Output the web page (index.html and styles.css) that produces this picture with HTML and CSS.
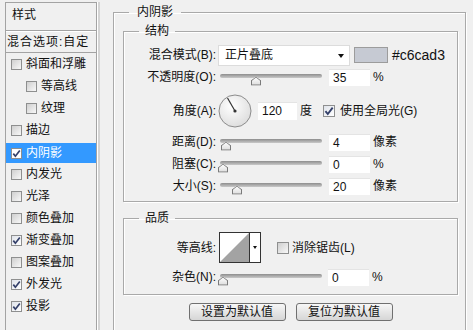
FILE: index.html
```html
<!DOCTYPE html>
<html lang="zh-CN">
<head>
    <meta charset="UTF-8">
    <title>图层样式 - 内阴影</title>
    <link rel="stylesheet" href="styles.css">
</head>
<body>

<div class="dialog">
    <div class="style-list">
        <div class="list-head">样式</div>
        <div class="list-blend">混合选项:自定</div>
        <div class="list-item"><span class="check"></span>斜面和浮雕</div>
        <div class="list-item sub"><span class="check"></span>等高线</div>
        <div class="list-item sub"><span class="check"></span>纹理</div>
        <div class="list-item"><span class="check"></span>描边</div>
        <div class="list-item active"><span class="check on"><svg width="9" height="9" viewBox="0 0 9 9"><path d="M1.3 4.6 L3.4 7.2 L7.8 1.4" fill="none" stroke="#34406a" stroke-width="1.7"/></svg></span>内阴影</div>
        <div class="list-item"><span class="check"></span>内发光</div>
        <div class="list-item"><span class="check"></span>光泽</div>
        <div class="list-item"><span class="check"></span>颜色叠加</div>
        <div class="list-item"><span class="check on"><svg width="9" height="9" viewBox="0 0 9 9"><path d="M1.3 4.6 L3.4 7.2 L7.8 1.4" fill="none" stroke="#34406a" stroke-width="1.7"/></svg></span>渐变叠加</div>
        <div class="list-item"><span class="check"></span>图案叠加</div>
        <div class="list-item"><span class="check on"><svg width="9" height="9" viewBox="0 0 9 9"><path d="M1.3 4.6 L3.4 7.2 L7.8 1.4" fill="none" stroke="#34406a" stroke-width="1.7"/></svg></span>外发光</div>
        <div class="list-item"><span class="check on"><svg width="9" height="9" viewBox="0 0 9 9"><path d="M1.3 4.6 L3.4 7.2 L7.8 1.4" fill="none" stroke="#34406a" stroke-width="1.7"/></svg></span>投影</div>
    </div>

    <div class="main">
        <fieldset class="group outer">
            <legend>内阴影</legend>
            <div class="outer-body">

                <fieldset class="group">
                    <legend>结构</legend>
                    <div class="group-body">
                        <div class="row">
                            <span class="lbl">混合模式(B):</span>
                            <div class="select">正片叠底<span class="arrow"></span></div>
                            <span class="swatch"></span>
                            <span class="hex">#c6cad3</span>
                        </div>
                        <div class="row">
                            <span class="lbl">不透明度(O):</span>
                            <div class="slider"><span class="thumb" style="left: 31px"></span></div>
                            <div class="num">35</div>
                            <span class="unit">%</span>
                        </div>
                        <div class="row tall">
                            <span class="lbl">角度(A):</span>
                            <svg class="dial" width="34" height="34" viewBox="0 0 34 34">
                                <defs>
                                    <radialGradient id="dialfill" cx="40%" cy="35%" r="70%">
                                        <stop offset="0" stop-color="#ffffff"/>
                                        <stop offset="1" stop-color="#dcdcdc"/>
                                    </radialGradient>
                                </defs>
                                <circle cx="17" cy="17" r="16" fill="url(#dialfill)" stroke="#8c8c8c"/>
                                <line x1="17" y1="17" x2="9.5" y2="4" stroke="#333" stroke-width="1.2"/>
                                <circle cx="17" cy="17" r="1.6" fill="#333"/>
                            </svg>
                            <div class="num angle">120</div>
                            <span class="unit">度</span>
                            <span class="check big on"><svg width="10" height="10" viewBox="0 0 9 9"><path d="M1.3 4.6 L3.4 7.2 L7.8 1.4" fill="none" stroke="#34406a" stroke-width="1.7"/></svg></span>
                            <span class="check-text">使用全局光(G)</span>
                        </div>
                        <div class="row gap">
                            <span class="lbl">距离(D):</span>
                            <div class="slider"><span class="thumb" style="left: 1px"></span></div>
                            <div class="num">4</div>
                            <span class="unit">像素</span>
                        </div>
                        <div class="row">
                            <span class="lbl">阻塞(C):</span>
                            <div class="slider"><span class="thumb" style="left: -2px"></span></div>
                            <div class="num">0</div>
                            <span class="unit">%</span>
                        </div>
                        <div class="row">
                            <span class="lbl">大小(S):</span>
                            <div class="slider"><span class="thumb" style="left: 12px"></span></div>
                            <div class="num">20</div>
                            <span class="unit">像素</span>
                        </div>
                    </div>
                </fieldset>

                <fieldset class="group quality">
                    <legend>品质</legend>
                    <div class="group-body">
                        <div class="row contour-row">
                            <span class="lbl">等高线:</span>
                            <div class="contour">
                                <svg width="29" height="29" viewBox="0 0 29 29">
                                    <rect width="29" height="29" fill="#fff"/>
                                    <polygon points="0,29 29,0 29,29" fill="#a3a3a3"/>
                                </svg>
                                <span class="contour-drop"><span class="arrow small"></span></span>
                            </div>
                            <span class="check big"></span>
                            <span class="check-text">消除锯齿(L)</span>
                        </div>
                        <div class="row">
                            <span class="lbl">杂色(N):</span>
                            <div class="slider"><span class="thumb" style="left: -2px"></span></div>
                            <div class="num noise">0</div>
                            <span class="unit">%</span>
                        </div>
                    </div>
                </fieldset>

                <div class="buttons">
                    <button class="btn">设置为默认值</button>
                    <button class="btn">复位为默认值</button>
                </div>

            </div>
        </fieldset>
    </div>
</div>

</body>
</html>
```

FILE: styles.css
```css
body {
    margin: 0;
    padding: 0;
    width: 473px;
    height: 330px;
    overflow: hidden;
    background-color: #f0f0f0;
    color: #111;
    font-family: "Liberation Sans", "Noto Sans CJK SC", sans-serif;
    font-size: 12px;
    line-height: 14px;
}
.dialog {
    display: flex;
    height: 330px;
    padding: 2px 0 0 5px;
    box-sizing: border-box;
}

/* left list */
.style-list {
    flex: none;
    width: 90px;
    border: 1px solid #a3a3a3;
    border-bottom: none;
    box-shadow: 1px 0 0 #fff, 3px 0 0 #d4d4d4;
}
.list-head {
    height: 27px;
    line-height: 25px;
    padding-left: 6px;
    border-bottom: 1px solid #a3a3a3;
    box-shadow: 0 1px 0 #fff;
    margin-bottom: 1px;
}
.list-blend {
    height: 20px;
    line-height: 20px;
    padding-left: 1px;
    letter-spacing: 1px;
    white-space: nowrap;
    border-bottom: 1px solid #a3a3a3;
}
.list-item {
    display: flex;
    align-items: center;
    height: 22px;
    padding-left: 5px;
    white-space: nowrap;
}
.list-item.sub {
    padding-left: 20px;
}
.list-item.active {
    height: 20px;
    padding-top: 2px;
    padding-left: 0;
    background-color: #3399ff;
    background-clip: content-box;
    color: #fff;
}
.list-item.active .check {
    margin-left: 5px;
    background: #fff;
}

/* checkbox */
.check {
    flex: none;
    display: inline-flex;
    align-items: center;
    justify-content: center;
    width: 9px;
    height: 9px;
    margin-right: 4px;
    border: 1px solid #8e8f8f;
    background: linear-gradient(135deg, #cfcfcf, #f8f8f8);
}
.check.on {
    background: linear-gradient(135deg, #dfe3ea, #ffffff);
}
.check.big {
    width: 10px;
    height: 10px;
}

/* right side */
.main {
    flex: none;
    width: 353px;
    padding: 3px 0 0 16px;
    margin-right: 3px;
}
.group {
    margin: 0;
    padding: 0;
    min-width: 0;
    border: 1px solid #a9a9a9;
    box-shadow: inset 1px 1px 0 #fff, 1px 1px 0 #fff;
}
.group legend {
    padding: 0 6px;
    margin-left: 15px;
    line-height: 14px;
}
.outer {
    width: 353px;
    box-sizing: border-box;
    border-bottom: none;
}
.outer > legend {
    padding: 0 8px;
    margin-left: 15px;
}
.outer-body {
    padding: 5px 7px 20px 9px;
}
.group-body {
    padding: 6px 0 4px 4px;
}
.quality {
    margin-top: 9px;
}
.quality .group-body {
    padding: 5px 0 6px 4px;
}

.row {
    display: flex;
    align-items: center;
    height: 22px;
    white-space: nowrap;
}
.row.tall {
    height: 36px;
    margin-top: 5px;
}
.row.gap {
    margin-top: 2px;
}
.row.contour-row {
    height: 35px;
    margin-bottom: 1px;
}
.lbl {
    flex: none;
    width: 88px;
    text-align: right;
}

.select {
    position: relative;
    width: 124px;
    height: 19px;
    margin-left: 2px;
    padding-left: 6px;
    line-height: 19px;
    background: #fff;
    border: 1px solid #dcdcdc;
}
.arrow {
    position: absolute;
    right: 5px;
    top: 8px;
    width: 0;
    height: 0;
    border-left: 3.5px solid transparent;
    border-right: 3.5px solid transparent;
    border-top: 4px solid #111;
}
.arrow.small {
    right: 3px;
    top: 13px;
    border-left-width: 2.5px;
    border-right-width: 2.5px;
    border-top-width: 3px;
}
.swatch {
    width: 32px;
    height: 14px;
    margin-left: 4px;
    background-color: #c6cad3;
    border: 1px solid #9c9c9c;
}
.hex {
    margin-left: 4px;
    font-size: 14px;
}

.slider {
    position: relative;
    flex: none;
    width: 102px;
    height: 13px;
    margin: 6px 0 0 4px;
}
.slider::before {
    content: "";
    position: absolute;
    left: 0;
    right: 0;
    top: 0;
    height: 4px;
    border-radius: 2px;
    background: linear-gradient(#8d8d8d, #c9c9c9);
}
.thumb {
    position: absolute;
    top: 3px;
    width: 10px;
    height: 9px;
    background: linear-gradient(#ffffff, #d9d9d9);
    clip-path: polygon(50% 0, 100% 42%, 100% 100%, 0 100%, 0 42%);
}
.thumb::after {
    content: "";
    position: absolute;
    inset: 0;
    background: #7a7a7a;
    clip-path: polygon(50% 0, 100% 42%, 100% 100%, 0 100%, 0 42%, 0 42%, 1px 46%, 1px calc(100% - 1px), calc(100% - 1px) calc(100% - 1px), calc(100% - 1px) 46%, 50% 12%, 1px 46%, 0 42%);
}

.num {
    flex: none;
    width: 37px;
    height: 16px;
    margin-left: 7px;
    padding-left: 4px;
    line-height: 16px;
    background: #fff;
    border-top: 1px solid #e4e4e4;
}
.num.angle {
    width: 35px;
    height: 17px;
    margin-left: 6px;
    line-height: 17px;
}
.num.noise {
    margin-left: 6px;
}
.unit {
    margin-left: 3px;
}
.dial {
    flex: none;
    margin-left: 2px;
}
.row.tall .check {
    margin-left: 11px;
    margin-right: 5px;
}
.contour-row .check {
    margin-left: 16px;
    margin-right: 3px;
}

.contour {
    display: flex;
    margin-left: 3px;
    border: 1px solid #333;
    background: #fff;
}
.contour svg {
    display: block;
}
.contour-drop {
    position: relative;
    width: 10px;
    border-left: 1px solid #333;
}

.buttons {
    display: flex;
    justify-content: center;
    gap: 10px;
    margin-top: 8px;
}
.btn {
    width: 97px;
    height: 18px;
    padding: 0;
    border: 1px solid #707070;
    border-radius: 3px;
    background: linear-gradient(#f7f7f7, #e6e6e6 50%, #d6d6d6);
    color: #111;
    font-family: "Liberation Sans", "Noto Sans CJK SC", sans-serif;
    font-size: 12px;
    line-height: 16px;
}
```
